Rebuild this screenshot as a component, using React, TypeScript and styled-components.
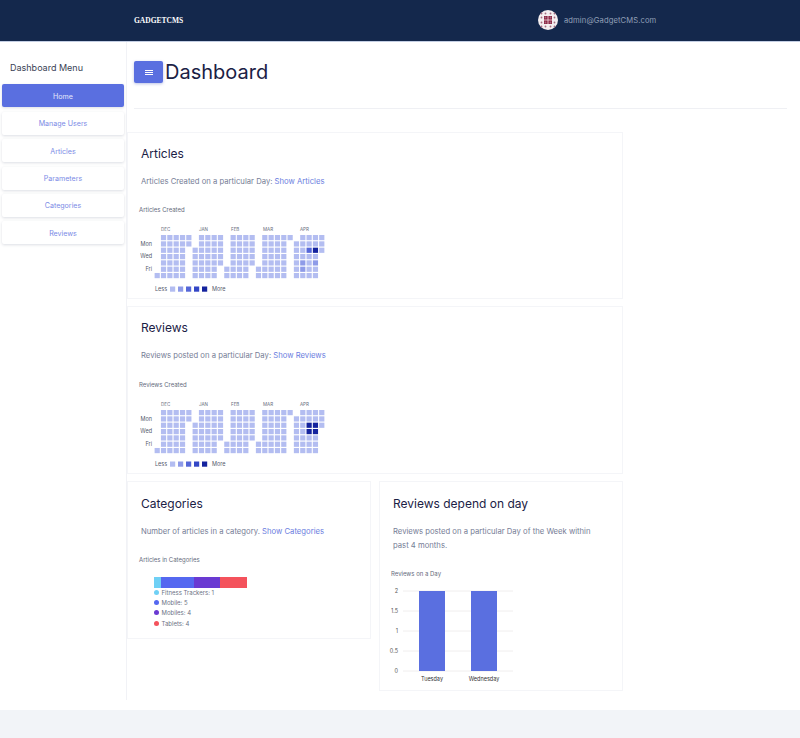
import React from "react";
import styled, { createGlobalStyle } from "styled-components";

const GlobalStyle = createGlobalStyle`
  html, body { margin: 0; padding: 0; background: #fff; }
  body { font-family: Inter, "Liberation Sans", sans-serif; color: #1b2145; }
  * { box-sizing: border-box; }
`;

const Page = styled.div`
  display: flex;
  flex-direction: column;
  width: 800px;
  height: 738px;
  overflow: hidden;
`;

const TopBar = styled.header`
  display: flex;
  align-items: center;
  height: 42px;
  flex-shrink: 0;
  padding: 0 0 1px 134px;
  background: #14284c;
  border-bottom: 1px solid #c3cee3;
`;

const Brand = styled.div`
  width: 404px;
  color: #fff;
  font-family: "Liberation Serif", serif;
  font-size: 7.5px;
  font-weight: 700;
`;

const UserEmail = styled.span`
  margin-left: 6px;
  color: #93a0b8;
  font-size: 7.6px;
  letter-spacing: 0.1px;
`;

const Body = styled.div`
  display: flex;
  height: 668px;
  flex-shrink: 0;
`;

const Sidebar = styled.aside`
  width: 127px;
  height: 658px;
  flex-shrink: 0;
  padding: 19px 2px 0;
  border-right: 1px solid #f1f2f6;
`;

const MenuTitle = styled.div`
  height: 23.4px;
  padding: 0 0 0 8px;
  font-size: 9px;
  line-height: 13px;
  color: #3a3f55;
`;

const MenuItem = styled.a<{ $active?: boolean }>`
  display: flex;
  align-items: center;
  justify-content: center;
  width: 122px;
  height: 23px;
  margin-bottom: 4.4px;
  padding-top: 1px;
  border-radius: 2px;
  font-size: 7.1px;
  color: ${({ $active }) => ($active ? "#e4e8fb" : "#7b8be6")};
  background: ${({ $active }) => ($active ? "#5a6fe0" : "#fff")};
  box-shadow: 0 1px 3px rgba(40, 50, 90, 0.16);
`;

const Main = styled.main`
  flex: 1;
  min-width: 0;
`;

const TitleRow = styled.div`
  display: flex;
  align-items: flex-start;
  gap: 2px;
  height: 67px;
  margin: 0 13px 0 7px;
  padding-top: 19px;
  border-bottom: 1px solid #eff0f4;
`;

const MenuButton = styled.button`
  display: flex;
  align-items: center;
  justify-content: center;
  width: 29px;
  height: 22px;
  padding: 0;
  border: none;
  border-radius: 2px;
  background: #5a6fe0;
  box-shadow: 0 1px 3px rgba(60, 80, 180, 0.35);
`;

const PageTitle = styled.h1`
  margin: 0;
  font-size: 20px;
  font-weight: 400;
  line-height: 23px;
  color: #1b2145;
`;

const CardGrid = styled.div`
  display: grid;
  grid-template-columns: 244px 244px;
  column-gap: 8px;
  row-gap: 7px;
  align-items: start;
  margin-top: 23px;
`;

const Card = styled.section<{ $wide?: boolean; $height: number; $lower?: boolean }>`
  grid-column: ${({ $wide }) => ($wide ? "1 / 3" : "auto")};
  height: ${({ $height }) => $height}px;
  padding: ${({ $lower }) => ($lower ? 14 : 13)}px 13px 0;
  background: #fff;
  border: 1px solid #f4f5f8;
`;

const CardTitle = styled.h2`
  margin: 0;
  font-size: 12px;
  font-weight: 400;
  line-height: 16px;
  color: #1b2145;
`;

const CardText = styled.p`
  max-width: 205px;
  margin: 13px 0 0;
  font-size: 7.7px;
  line-height: 14px;
  color: #767d96;
`;

const ShowLink = styled.a`
  color: #6a7de0;
`;

const ChartLabel = styled.div<{ $top: number }>`
  margin: ${({ $top }) => $top}px 0 0 -2px;
  font-size: 6px;
  line-height: 8px;
  color: #666b7c;
`;

const HeatSvg = styled.svg`
  display: block;
  margin: 12px 0 0 -1px;
  font-family: Inter, "Liberation Sans", sans-serif;
`;

const BarSvg = styled.svg`
  display: block;
  margin: 9px 0 0 -5px;
  font-family: Inter, "Liberation Sans", sans-serif;
`;

const StackBar = styled.div`
  display: flex;
  width: 93px;
  height: 11px;
  margin: 13px 0 0 13px;
`;

const StackPart = styled.div<{ $color: string; $width: number }>`
  width: ${({ $width }) => $width}px;
  background: ${({ $color }) => $color};
`;

const Legend = styled.ul`
  margin: -1px 0 0 13px;
  padding: 0;
  list-style: none;
`;

const LegendRow = styled.li`
  display: flex;
  align-items: center;
  gap: 2.5px;
  height: 10.4px;
  font-size: 6px;
  color: #6d7285;
`;

const LegendDot = styled.span<{ $color: string }>`
  width: 5px;
  height: 5px;
  border-radius: 50%;
  background: ${({ $color }) => $color};
`;

const Footer = styled.footer`
  flex: 1;
  background: #f2f4f8;
`;

const SCALE = ["#b3bdf1", "#8e9be8", "#5567d8", "#3447c6", "#14239e"];

// column ranges of the contribution grid, one list per weekday row
const ROWS: [number, number][][] = [
  [[1, 5], [7, 10], [12, 15], [17, 21], [23, 26]],
  [[1, 5], [7, 10], [12, 15], [17, 20], [22, 26]],
  [[1, 4], [6, 10], [12, 15], [17, 20], [22, 26]],
  [[1, 4], [6, 10], [12, 15], [17, 20], [22, 25]],
  [[1, 4], [6, 10], [12, 15], [17, 20], [22, 25]],
  [[1, 4], [6, 9], [11, 14], [16, 20], [22, 25]],
  [[0, 4], [6, 9], [11, 14], [16, 20], [22, 25]],
];

const MONTHS: [string, number][] = [["DEC", 21], ["JAN", 59], ["FEB", 91], ["MAR", 123], ["APR", 160]];
const DAYS: [string, number][] = [["Mon", 9], ["Wed", 21], ["Fri", 34]];

type Level = [row: number, col: number, level: number];

const Heatmap = ({ levels }: { levels: Level[] }) => {
  const levelAt = (r: number, c: number) =>
    levels.find((l) => l[0] === r && l[1] === c)?.[2] ?? 0;
  return (
    <HeatSvg width={200} height={70} viewBox="0 0 200 70">
      {MONTHS.map(([m, x]) => (
        <text key={m} x={x} y={5} fontSize={4.5} fill="#666b7c">{m}</text>
      ))}
      {DAYS.map(([d, y]) => (
        <text key={d} x={12} y={y + 11} fontSize={5.5} textAnchor="end" fill="#555a6c">{d}</text>
      ))}
      {ROWS.map((ranges, r) =>
        ranges.map(([from, to]) =>
          Array.from({ length: to - from + 1 }, (_, i) => from + i).map((c) => (
            <rect
              key={`${r}-${c}`}
              x={14.6 + c * 6.33}
              y={9 + r * 6.33}
              width={5.2}
              height={5.2}
              fill={SCALE[levelAt(r, c)]}
            />
          ))
        )
      )}
      <text x={15} y={65} fontSize={5.5} fill="#555a6c">Less</text>
      {SCALE.map((color, i) => (
        <rect key={color} x={30 + i * 8} y={60.5} width={5.2} height={5.2} fill={color} />
      ))}
      <text x={72} y={65} fontSize={5.5} fill="#555a6c">More</text>
    </HeatSvg>
  );
};

const BarChart = () => (
  <BarSvg width={135} height={100} viewBox="0 0 135 100">
    {[["2", 4], ["1.5", 24], ["1", 44], ["0.5", 64], ["0", 84]].map(([label, y]) => (
      <g key={label}>
        <line x1={15} x2={125} y1={Number(y)} y2={Number(y)} stroke="#f0eeee" />
        <text x={10} y={Number(y) + 2} fontSize={5.5} textAnchor="end" fill="#555">{label}</text>
      </g>
    ))}
    <rect x={31} y={4} width={26} height={80} fill="#5a6fe0" />
    <rect x={83} y={4} width={26} height={80} fill="#5a6fe0" />
    <text x={44} y={94} fontSize={5.5} textAnchor="middle" fill="#333">Tuesday</text>
    <text x={96} y={94} fontSize={5.5} textAnchor="middle" fill="#333">Wednesday</text>
  </BarSvg>
);

const Avatar = () => (
  <svg width={20} height={20} viewBox="0 0 20 20">
    <circle cx={10} cy={10} r={10} fill="#f4eef0" />
    <rect x={6} y={6} width={8} height={8} fill="#8c2442" />
    {[3.5, 7.5, 12.5, 16.5].map((a) =>
      [3.5, 7.5, 12.5, 16.5].map((b) => (
        <circle key={`${a}-${b}`} cx={a} cy={b} r={0.9} fill="#a56c80" />
      ))
    )}
    <path d="M10 6v8M6 10h8" stroke="#f4dfe6" strokeWidth={0.8} />
  </svg>
);

const MENU = ["Manage Users", "Articles", "Parameters", "Categories", "Reviews"];

const CATEGORIES = [
  { name: "Fitness Trackers: 1", color: "#6fd0f5", width: 7 },
  { name: "Mobile: 5", color: "#5568f0", width: 33 },
  { name: "Mobiles: 4", color: "#6a3ad2", width: 26 },
  { name: "Tablets: 4", color: "#f4525c", width: 27 },
];

export default function App() {
  return (
    <Page>
      <GlobalStyle />
      <TopBar>
        <Brand>GADGETCMS</Brand>
        <Avatar />
        <UserEmail>admin@GadgetCMS.com</UserEmail>
      </TopBar>
      <Body>
        <Sidebar>
          <MenuTitle>Dashboard Menu</MenuTitle>
          <MenuItem $active>Home</MenuItem>
          {MENU.map((item) => (
            <MenuItem key={item}>{item}</MenuItem>
          ))}
        </Sidebar>
        <Main>
          <TitleRow>
            <MenuButton>
              <svg width={8} height={5} viewBox="0 0 8 5">
                <path d="M0 .5h8M0 2.5h8M0 4.5h8" stroke="#fff" strokeWidth={1} />
              </svg>
            </MenuButton>
            <PageTitle>Dashboard</PageTitle>
          </TitleRow>
          <CardGrid>
            <Card $wide $height={167}>
              <CardTitle>Articles</CardTitle>
              <CardText>
                Articles Created on a particular Day: <ShowLink>Show Articles</ShowLink>
              </CardText>
              <ChartLabel $top={17}>Articles Created</ChartLabel>
              <Heatmap levels={[[2, 24, 2], [2, 25, 4], [4, 23, 1], [4, 25, 1], [5, 23, 1]]} />
            </Card>
            <Card $wide $height={168}>
              <CardTitle>Reviews</CardTitle>
              <CardText>
                Reviews posted on a particular Day: <ShowLink>Show Reviews</ShowLink>
              </CardText>
              <ChartLabel $top={18}>Reviews Created</ChartLabel>
              <Heatmap levels={[[2, 24, 4], [2, 25, 4], [3, 24, 4], [3, 25, 4]]} />
            </Card>
            <Card $lower $height={158}>
              <CardTitle>Categories</CardTitle>
              <CardText>
                Number of articles in a category. <ShowLink>Show Categories</ShowLink>
              </CardText>
              <ChartLabel $top={17}>Articles in Categories</ChartLabel>
              <StackBar>
                {CATEGORIES.map((c) => (
                  <StackPart key={c.name} $color={c.color} $width={c.width} />
                ))}
              </StackBar>
              <Legend>
                {CATEGORIES.map((c) => (
                  <LegendRow key={c.name}>
                    <LegendDot $color={c.color} />
                    {c.name}
                  </LegendRow>
                ))}
              </Legend>
            </Card>
            <Card $lower $height={210}>
              <CardTitle>Reviews depend on day</CardTitle>
              <CardText>
                Reviews posted on a particular Day of the Week within past 4 months.
              </CardText>
              <ChartLabel $top={17}>Reviews on a Day</ChartLabel>
              <BarChart />
            </Card>
          </CardGrid>
        </Main>
      </Body>
      <Footer />
    </Page>
  );
}
